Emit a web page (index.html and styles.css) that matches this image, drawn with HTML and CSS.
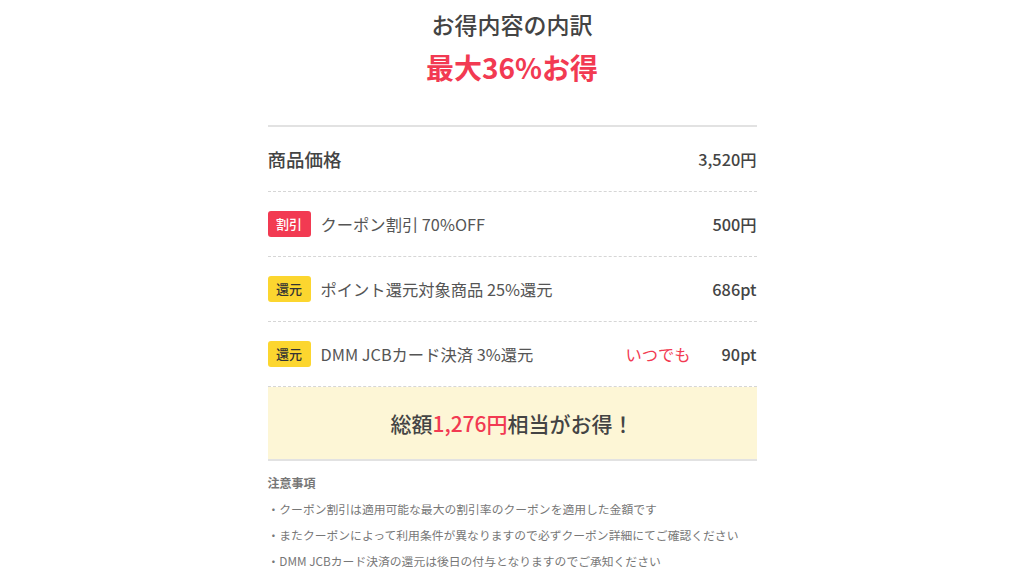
FILE: index.html
```html
<!DOCTYPE html>
<html lang="ja">
<head>
    <meta charset="UTF-8">
    <meta name="viewport" content="width=device-width, initial-scale=1.0">
    <title>お得内容の内訳</title>
    <link rel="stylesheet" href="styles.css">
</head>
<body>
    <div class="breakdown">
        <header class="breakdown-head">
            <h1>お得内容の内訳</h1>
            <p class="max-deal">最大36%お得</p>
        </header>

        <div class="rows">
            <div class="row row-price">
                <span class="label">商品価格</span>
                <span class="value">3,520円</span>
            </div>
            <div class="row">
                <span class="badge badge-red">割引</span>
                <span class="label">クーポン割引 70%OFF</span>
                <span class="value">500円</span>
            </div>
            <div class="row">
                <span class="badge badge-yellow">還元</span>
                <span class="label">ポイント還元対象商品 25%還元</span>
                <span class="value">686pt</span>
            </div>
            <div class="row">
                <span class="badge badge-yellow">還元</span>
                <span class="label">DMM JCBカード決済 3%還元</span>
                <span class="note">いつでも</span>
                <span class="value">90pt</span>
            </div>
        </div>

        <div class="total">
            総額<span class="accent">1,276円</span>相当がお得！
        </div>

        <div class="notice">
            <h2>注意事項</h2>
            <ul>
                <li>・クーポン割引は適用可能な最大の割引率のクーポンを適用した金額です</li>
                <li>・またクーポンによって利用条件が異なりますので必ずクーポン詳細にてご確認ください</li>
                <li>・DMM JCBカード決済の還元は後日の付与となりますのでご承知ください</li>
            </ul>
        </div>
    </div>
</body>
</html>
```

FILE: styles.css
```css
body {
    font-family: "Noto Sans CJK JP", "Noto Sans", sans-serif;
    margin: 0;
    padding: 0;
    background-color: #fff;
    color: #444;
}

.breakdown {
    width: 489px;
    margin: 0 auto;
}

.breakdown-head {
    text-align: center;
    padding-top: 8px;
    padding-bottom: 38px;
}

.breakdown-head h1 {
    margin: 0;
    font-size: 23px;
    line-height: 32px;
    font-weight: 500;
    color: #444;
}

.max-deal {
    margin: 7px 0 0;
    font-size: 28px;
    line-height: 40px;
    font-weight: 700;
    color: #f23a52;
}

.rows {
    border-top: 2px solid #e2e2e2;
}

.row {
    display: flex;
    align-items: center;
    height: 64px;
    border-bottom: 1px dashed #d6d6d6;
    font-size: 16.3px;
    color: #555;
}

.row .label {
    flex: 1;
}

.row-price .label {
    font-size: 18.5px;
    font-weight: 500;
    color: #444;
}

.row .value {
    font-weight: 500;
    color: #444;
}

.row .note {
    color: #f23a52;
    margin-right: 31px;
}

.badge {
    width: 43px;
    height: 26px;
    line-height: 26px;
    margin-right: 10px;
    border-radius: 3px;
    text-align: center;
    font-size: 13px;
    font-weight: 500;
}

.badge-red {
    background-color: #f23a52;
    color: #fff;
}

.badge-yellow {
    background-color: #fcd62f;
    color: #333;
}

.total {
    height: 72px;
    line-height: 72px;
    background-color: #fdf6d6;
    border-bottom: 2px solid #e2e2e2;
    text-align: center;
    font-size: 21px;
    font-weight: 500;
    color: #444;
}

.total .accent {
    color: #f23a52;
}

.notice {
    padding-top: 13px;
    color: #777;
}

.notice h2 {
    margin: 0;
    font-size: 12px;
    line-height: 18px;
    font-weight: 700;
}

.notice ul {
    list-style: none;
    margin: 0;
    padding: 0;
}

.notice li {
    font-size: 11.8px;
    line-height: 18px;
    margin-top: 8px;
}
```
